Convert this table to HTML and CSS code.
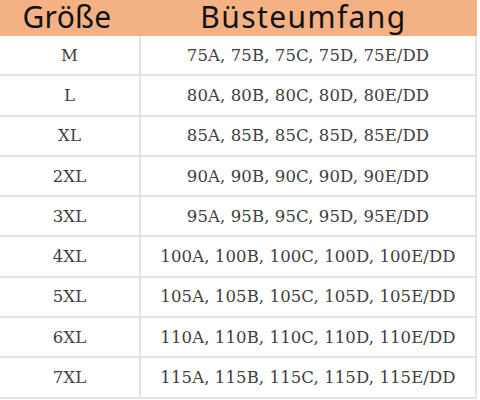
FILE: index.html
```html
<!DOCTYPE html>
<html>
<head>
<meta charset="utf-8">
<link rel="stylesheet" href="styles.css">
</head>
<body>
<div class="table">
  <div class="head">
    <div class="hcell size">Größe</div>
    <div class="hcell bust">Büsteumfang</div>
  </div>
  <div class="row"><div class="c1">M</div><div class="c2">75A, 75B, 75C, 75D, 75E/DD</div></div>
  <div class="row"><div class="c1">L</div><div class="c2">80A, 80B, 80C, 80D, 80E/DD</div></div>
  <div class="row"><div class="c1">XL</div><div class="c2">85A, 85B, 85C, 85D, 85E/DD</div></div>
  <div class="row"><div class="c1">2XL</div><div class="c2">90A, 90B, 90C, 90D, 90E/DD</div></div>
  <div class="row"><div class="c1">3XL</div><div class="c2">95A, 95B, 95C, 95D, 95E/DD</div></div>
  <div class="row"><div class="c1">4XL</div><div class="c2">100A, 100B, 100C, 100D, 100E/DD</div></div>
  <div class="row"><div class="c1">5XL</div><div class="c2">105A, 105B, 105C, 105D, 105E/DD</div></div>
  <div class="row"><div class="c1">6XL</div><div class="c2">110A, 110B, 110C, 110D, 110E/DD</div></div>
  <div class="row"><div class="c1">7XL</div><div class="c2">115A, 115B, 115C, 115D, 115E/DD</div></div>
</div>
</body>
</html>
```
FILE: styles.css
```css
html, body {
  margin: 0;
  padding: 0;
  background: #ffffff;
  overflow: hidden;
}
.table {
  width: 477px;
}
.head {
  display: grid;
  grid-template-columns: 134px 341px;
  height: 36px;
  background: #f4b183;
  font-family: "Noto Sans", sans-serif;
  font-size: 30px;
  color: #111111;
  line-height: 33px;
}
.hcell {
  text-align: center;
  white-space: nowrap;
}
.size {
  letter-spacing: 0.3px;
}
.bust {
  letter-spacing: 1.4px;
  padding-right: 2px;
}
.row {
  display: grid;
  grid-template-columns: 141px 1fr;
  height: 38.3px;
  border-bottom: 2px solid #e4e4e4;
  border-right: 2px solid #e4e4e4;
  font-family: "DejaVu Serif", serif;
  font-size: 16.5px;
  letter-spacing: 0.1px;
  color: #404040;
}
.c1, .c2 {
  display: flex;
  align-items: center;
  justify-content: center;
  white-space: nowrap;
}
.c1 {
  border-right: 2px solid #e4e4e4;
}
```
